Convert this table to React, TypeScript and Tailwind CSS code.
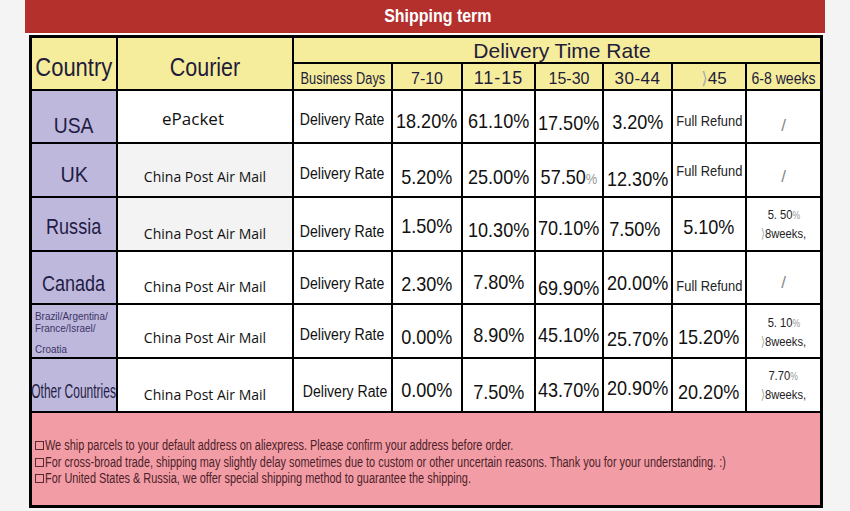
import React from 'react';

const sans = "font-['Liberation_Sans',Arial,sans-serif]";
const humanist = "font-['Open_Sans','Noto_Sans',sans-serif]";

type Cell = { t: React.ReactNode; c?: string };

// the source uses a condensed face; squeeze Liberation Sans instead
const Sq = ({ children, s = 'scale-x-[0.86]' }: { children: React.ReactNode; s?: string }) => (
    <span className={`inline-block whitespace-nowrap ${s}`}>{children}</span>
);

const Angle = () => <span className="text-[#aaa] font-['DejaVu_Sans',sans-serif]">⟩</span>;

const Weeks = ({ top }: { top: string }) => (
    <div className="flex flex-col items-center text-[13px] leading-[18px] text-[#222]">
        <Sq s="scale-x-[0.86]">
            {top}
            <span className="text-[10px] text-[#999]">%</span>
        </Sq>
        <Sq s="scale-x-[0.86]">
            <Angle />
            8weeks,
        </Sq>
    </div>
);

const Slash = () => <span className="text-[17px] text-[#888] font-light">/</span>;

const Refund = () => (
    <Sq s="scale-x-[0.86]">
        <span className="text-[15px] text-[#222]">Full Refund</span>
    </Sq>
);

const Pct = ({ v }: { v: React.ReactNode }) => <Sq s="scale-x-[0.86]">{v}</Sq>;

const rows: { country: Cell; courier: Cell; rate: Cell; values: Cell[]; tint?: boolean }[] = [
    {
        country: { t: <Sq s="scale-x-[0.88]">USA</Sq>, c: 'pt-[17px]' },
        courier: { t: <span className="text-[17px]">ePacket</span>, c: 'pt-[4px] pr-[24px]' },
        rate: { t: 'Delivery Rate', c: 'pt-[6px]' },
        values: [
            { t: <Pct v="18.20%" />, c: 'pt-[8px]' },
            { t: <Pct v="61.10%" />, c: 'pt-[8px]' },
            { t: <Pct v="17.50%" />, c: 'pt-[12px]' },
            { t: <Pct v="3.20%" />, c: 'pt-[11px]' },
            { t: <Refund />, c: 'pt-[5px]' },
            { t: <Slash />, c: 'pt-[18px]' },
        ],
    },
    {
        country: { t: <Sq s="scale-x-[0.9]">UK</Sq>, c: 'pt-[8px]' },
        courier: { t: 'China Post Air Mail', c: 'pt-[12px]' },
        rate: { t: 'Delivery Rate', c: 'pt-[8px]' },
        tint: true,
        values: [
            { t: <Pct v="5.20%" />, c: 'pt-[14px]' },
            { t: <Pct v="25.00%" />, c: 'pt-[14px]' },
            { t: <Pct v={<>57.50<span className="text-[15px] text-[#999]">%</span></>} />, c: 'pt-[14px]' },
            { t: <Pct v="12.30%" />, c: 'pt-[18px]' },
            { t: <Refund />, c: 'pb-[2px]' },
            { t: <Slash />, c: 'pt-[14px]' },
        ],
    },
    {
        country: { t: <Sq s="scale-x-[0.82]">Russia</Sq>, c: 'pt-[5px]' },
        courier: { t: 'China Post Air Mail', c: 'pt-[18px]' },
        rate: { t: 'Delivery Rate', c: 'pt-[16px]' },
        tint: true,
        values: [
            { t: <Pct v="1.50%" />, c: 'pt-[4px]' },
            { t: <Pct v="10.30%" />, c: 'pt-[12px]' },
            { t: <Pct v="70.10%" />, c: 'pt-[8px]' },
            { t: <Pct v="7.50%" />, c: 'pt-[10px] pr-[6px]' },
            { t: <Pct v="5.10%" />, c: 'pt-[6px]' },
            { t: <Weeks top="5. 50" /> },
        ],
    },
    {
        country: { t: <Sq s="scale-x-[0.82]">Canada</Sq>, c: 'pt-[11px]' },
        courier: { t: 'China Post Air Mail', c: 'pt-[17px]' },
        rate: { t: 'Delivery Rate', c: 'pt-[13px]' },
        values: [
            { t: <Pct v="2.30%" />, c: 'pt-[12px]' },
            { t: <Pct v="7.80%" />, c: 'pt-[9px]' },
            { t: <Pct v="69.90%" />, c: 'pt-[20px]' },
            { t: <Pct v="20.00%" />, c: 'pt-[11px]' },
            { t: <Refund />, c: 'pt-[13px]' },
            { t: <Slash />, c: 'pt-[11px]' },
        ],
    },
    {
        country: {
            t: (
                <div className="self-start w-full pl-[3px] pt-[5px] text-[11px] leading-[12px] text-[#3b3566] text-left">
                    <div className="origin-left scale-x-[0.9] whitespace-nowrap">Brazil/Argentina/</div>
                    <div className="origin-left scale-x-[0.9] whitespace-nowrap">France/Israel/</div>
                    <div className="origin-left scale-x-[0.9] whitespace-nowrap mt-[9px]">Croatia</div>
                </div>
            ),
        },
        courier: { t: 'China Post Air Mail', c: 'pt-[13px]' },
        rate: { t: 'Delivery Rate', c: 'pt-[8px]' },
        values: [
            { t: <Pct v="0.00%" />, c: 'pt-[12px]' },
            { t: <Pct v="8.90%" />, c: 'pt-[8px]' },
            { t: <Pct v="45.10%" />, c: 'pt-[8px]' },
            { t: <Pct v="25.70%" />, c: 'pt-[16px]' },
            { t: <Pct v="15.20%" />, c: 'pt-[12px]' },
            { t: <Weeks top="5. 10" />, c: 'pt-[2px]' },
        ],
    },
    {
        country: {
            t: <span className="inline-block whitespace-nowrap text-[20px] scale-x-[0.6]">Other Countries</span>,
            c: 'pt-[12px]',
        },
        courier: { t: 'China Post Air Mail', c: 'pt-[18px]' },
        rate: { t: 'Delivery Rate', c: 'pt-[14px] pl-[5px]' },
        values: [
            { t: <Pct v="0.00%" />, c: 'pt-[10px]' },
            { t: <Pct v="7.50%" />, c: 'pt-[14px]' },
            { t: <Pct v="43.70%" />, c: 'pt-[10px]' },
            { t: <Pct v="20.90%" />, c: 'pt-[6px]' },
            { t: <Pct v="20.20%" />, c: 'pt-[14px]' },
            { t: <Weeks top="7.70" /> },
        ],
    },
];

const subHeads: Cell[] = [
    { t: <Sq s="scale-x-[0.8]">Business Days</Sq>, c: 'text-[16px]' },
    { t: '7-10', c: 'text-[16px]' },
    { t: '11-15', c: 'text-[18px] tracking-[1px]' },
    { t: '15-30', c: 'text-[16px]' },
    { t: '30-44', c: 'text-[17px] tracking-[0.5px]' },
    { t: <span><Angle />45</span>, c: 'text-[17px] pl-[10px]' },
    { t: <Sq s="scale-x-[0.88]">6-8 weeks</Sq>, c: 'text-[16px]' },
];

const center = 'flex items-center justify-center';

export default function App() {
    return (
        <div className={`w-[850px] h-[511px] overflow-hidden bg-[#f4f4f4] ${sans}`}>
            <div className="mx-[25px] h-[33px] bg-[#b3302d] flex items-center justify-center pl-[26px]">
                <Sq s="scale-x-[0.84]">
                    <span className="text-white font-bold text-[19px]">Shipping term</span>
                </Sq>
            </div>
            <div className="h-[2px] mx-[25px] bg-white" />
            <div className="ml-[29px] w-[794px] bg-black p-[3px] grid gap-[2px] grid-cols-[84px_174px_97px_68px_71px_66px_67px_72px_73px] grid-rows-[24px_25px_51px_52px_52px_51px_52px_52px_92px]">
                <div className={`row-span-2 bg-[#f6ed9c] ${center} pt-[9px] text-[25px] text-[#221c3a]`}>
                    <Sq s="scale-x-[0.88]">Country</Sq>
                </div>
                <div className={`row-span-2 bg-[#f6ed9c] ${center} pt-[9px] text-[25px] text-[#221c3a]`}>
                    <Sq s="scale-x-[0.86]">Courier</Sq>
                </div>
                <div className={`col-span-7 bg-[#f6ed9c] ${center} pt-[2px] pl-[10px] text-[21px] text-[#221c3a]`}>
                    Delivery Time Rate
                </div>
                {subHeads.map((h, i) => (
                    <div key={i} className={`bg-[#f6ed9c] ${center} pt-[4px] text-[#221c3a] whitespace-nowrap ${h.c ?? ''}`}>
                        {h.t}
                    </div>
                ))}
                {rows.map((r, i) => (
                    <React.Fragment key={i}>
                        <div className={`bg-[#bfb8dd] ${center} text-[22px] text-[#1f1d45] ${r.country.c ?? ''}`}>{r.country.t}</div>
                        <div className={`${r.tint ? 'bg-[#f4f3f3]' : 'bg-white'} ${center} text-[14px] text-[#111] whitespace-nowrap ${humanist} ${r.courier.c ?? ''}`}>
                            {r.courier.t}
                        </div>
                        <div className={`bg-white ${center} text-[16px] text-[#111] ${r.rate.c ?? ''}`}>
                            <Sq s="scale-x-[0.88]">{r.rate.t}</Sq>
                        </div>
                        {r.values.map((v, j) => (
                            <div key={j} className={`bg-white ${center} text-[21px] text-[#111] whitespace-nowrap ${v.c ?? ''}`}>
                                {v.t}
                            </div>
                        ))}
                    </React.Fragment>
                ))}
                <div className="col-span-9 bg-[#f29da6] flex flex-col justify-center pl-[3px] pt-[6px] text-[14px] leading-[16.5px] text-[#4d2128]">
                    {[
                        'We ship parcels to your default address on aliexpress. Please confirm your address before order.',
                        'For cross-broad trade, shipping may slightly delay sometimes due to custom or other uncertain reasons. Thank you for your understanding. :)',
                        'For United States & Russia, we offer special shipping method to guarantee the shipping.',
                    ].map((line, i) => (
                        <div key={i} className="flex items-center whitespace-nowrap">
                            <span className="inline-block w-[9px] h-[9px] shrink-0 border border-[#5a2a30] mr-[1px]" />
                            <span className="inline-block origin-left scale-x-[0.78]">{line}</span>
                        </div>
                    ))}
                </div>
            </div>
        </div>
    );
}
